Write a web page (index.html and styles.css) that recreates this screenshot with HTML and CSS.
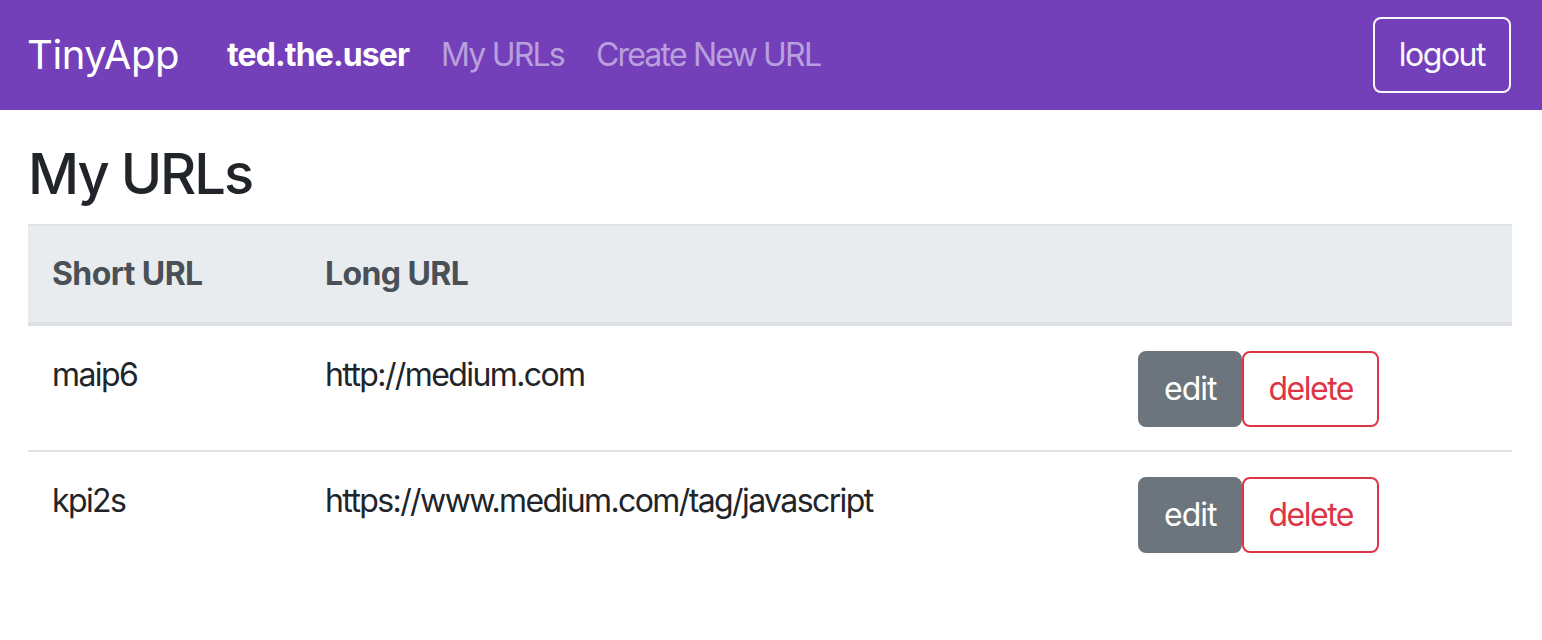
FILE: index.html
```html
<!DOCTYPE html>
<html lang="en">
<head>
<meta charset="utf-8">
<title>TinyApp</title>
<link rel="stylesheet" href="styles.css">
</head>
<body>
<nav class="navbar">
  <a class="brand" href="#">TinyApp</a>
  <div class="nav-links">
    <span class="nav-link user">ted.the.user</span>
    <a class="nav-link" href="#">My URLs</a>
    <a class="nav-link" href="#">Create New URL</a>
  </div>
  <button class="btn btn-outline-light" type="button">logout</button>
</nav>
<main class="container">
  <h3 class="title">My URLs</h3>
  <table class="table">
    <thead>
      <tr>
        <th class="col-short">Short URL</th>
        <th class="col-long">Long URL</th>
        <th class="col-actions"></th>
      </tr>
    </thead>
    <tbody>
      <tr>
        <td>maip6</td>
        <td>http://medium.com</td>
        <td><div class="actions"><a class="btn btn-secondary" href="#">edit</a><button class="btn btn-outline-danger" type="button">delete</button></div></td>
      </tr>
      <tr>
        <td>kpi2s</td>
        <td>https://www.medium.com/tag/javascript</td>
        <td><div class="actions"><a class="btn btn-secondary" href="#">edit</a><button class="btn btn-outline-danger" type="button">delete</button></div></td>
      </tr>
    </tbody>
  </table>
</main>
</body>
</html>
```
FILE: styles.css
```css
* { box-sizing: border-box; }
html, body { margin: 0; padding: 0; }
body {
  font-family: Inter, "Noto Sans", "Liberation Sans", sans-serif;
  font-size: 32px;
  line-height: 1.5;
  letter-spacing: -1.6px;
  color: #212529;
  background: #fff;
}
a { text-decoration: none; }

.navbar {
  display: flex;
  align-items: center;
  height: 110px;
  padding: 0 31px 0 27px;
  background: #7440b9;
}
.brand {
  font-size: 40px;
  color: #fff;
  margin-right: 32px;
  line-height: 1.5;
  letter-spacing: -0.4px;
}
.nav-links {
  display: flex;
  flex: 1;
}
.nav-link {
  padding: 0 16px;
  color: rgba(255, 255, 255, 0.5);
  letter-spacing: -1.8px;
}
.nav-link.user {
  color: #fff;
  font-weight: 700;
  letter-spacing: -0.9px;
}

.btn {
  display: inline-block;
  font-family: inherit;
  font-size: 32px;
  line-height: 48px;
  letter-spacing: -1.5px;
  padding: 12px 24px;
  border: 2px solid transparent;
  border-radius: 8px;
  background: transparent;
  cursor: pointer;
}
.btn-outline-light {
  color: #f8f9fa;
  border-color: #f8f9fa;
}
.btn-secondary {
  color: #fff;
  background: #6c757d;
  border-color: #6c757d;
  letter-spacing: -1px;
}
.btn-outline-danger {
  color: #dc3545;
  border-color: #dc3545;
  background: #fff;
}

.container {
  padding: 0 30px 0 28px;
}
.title {
  margin: 0 0 16px;
  padding-top: 31px;
  font-size: 56px;
  font-weight: 500;
  line-height: 1.2;
  letter-spacing: -2px;
}

.table {
  width: 100%;
  border-collapse: collapse;
}
.table th, .table td {
  padding: 24px;
  text-align: left;
  vertical-align: top;
  border-top: 2px solid #dee2e6;
}
.table thead th {
  background: #e9ecef;
  color: #495057;
  font-weight: 700;
  letter-spacing: -0.6px;
  border-bottom: 4px solid #dee2e6;
}
.table tbody td {
  padding-top: 25px;
  padding-bottom: 23px;
}
.col-short { width: 273px; }
.col-long { width: 813px; }
.actions {
  display: flex;
}
```
